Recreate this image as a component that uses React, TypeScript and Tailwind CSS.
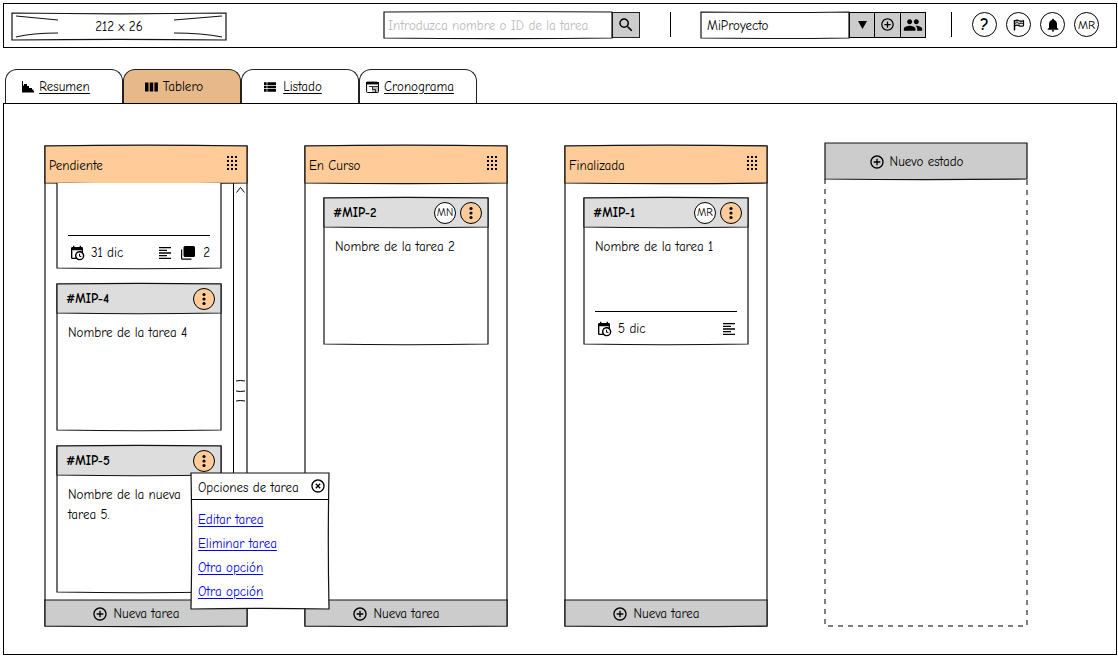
import { useState } from 'react';
import type { ReactNode } from 'react';
import {
  MdAddCircleOutline,
  MdFormatAlignLeft,
  MdHighlightOff,
  MdNotifications,
  MdPeople,
  MdSearch,
  MdViewList,
} from 'react-icons/md';

/* Hand-drawn outline: each side bows by a percentage of the box. */
function Outline({ t = 0, r = 0, b = 0, l = 0 }: { t?: number; r?: number; b?: number; l?: number }) {
  const d = `M0 0Q50 ${-t} 100 0Q${100 + r} 50 100 100Q50 ${100 + b} 0 100Q${-l} 50 0 0Z`;
  return (
    <svg
      aria-hidden="true"
      className="pointer-events-none absolute inset-0 -z-10 size-full overflow-visible"
      viewBox="0 0 100 100"
      preserveAspectRatio="none"
    >
      <path d={d} fill="currentColor" stroke="#111" strokeWidth="1.2" vectorEffect="non-scaling-stroke" />
    </svg>
  );
}

function CalendarClock() {
  return (
    <svg aria-hidden="true" viewBox="0 0 24 24" className="size-4" fill="currentColor">
      <path d="M15 13h1.5v2.82l2.44 1.41-.75 1.3L15 16.69V13m4-5H5v11h4.67C9.24 18.09 9 17.07 9 16a7 7 0 0 1 7-7c1.07 0 2.09.24 3 .67V8M5 21a2 2 0 0 1-2-2V5c0-1.11.89-2 2-2h1V1h2v2h8V1h2v2h1a2 2 0 0 1 2 2v6.1c1.24 1.26 2 2.99 2 4.9a7 7 0 0 1-7 7c-1.91 0-3.64-.76-4.9-2H5m11-9.85A4.85 4.85 0 0 0 11.15 16c0 2.68 2.17 4.85 4.85 4.85A4.85 4.85 0 0 0 20.85 16c0-2.68-2.17-4.85-4.85-4.85Z" />
    </svg>
  );
}

function Copies() {
  return (
    <svg aria-hidden="true" viewBox="0 0 14 14" className="size-[14px]" fill="currentColor">
      <path d="M4 0h8.500a1.500 1.500 0 0 1 1.500 1.500v8a1.500 1.500 0 0 1-1.500 1.500H4a1.500 1.500 0 0 1-1.500-1.500v-8A1.500 1.500 0 0 1 4 0ZM0 3.500h1.200v9H10.500v1.200H1.200A1.200 1.200 0 0 1 0 12.500v-9Z" />
    </svg>
  );
}

function Histogram() {
  return (
    <svg aria-hidden="true" viewBox="0 0 12 12" className="size-3" fill="currentColor">
      <path d="M0 0h1v10h11v1.500H0V0ZM1 4.500h1V3h3v2h2v2h3v1.500h1.500V11H1V4.500Z" />
    </svg>
  );
}

function Columns() {
  return (
    <svg aria-hidden="true" viewBox="0 0 13 12" className="h-3 w-[13px]" fill="currentColor">
      <path d="M0 1.500h3.500v9H0zM4.700 1.500h3.500v9H4.700zM9.400 1.500h3.500v9H9.400z" />
    </svg>
  );
}

function Schedule() {
  return (
    <svg aria-hidden="true" viewBox="0 0 13 12" className="h-3 w-[13px]" fill="none" stroke="currentColor">
      <path d="M6 6h6v5H6z" fill="#bbb" stroke="none" />
      <path d="M.6 2v8.500q0 1 1 1h10q.9 0 .9-1V2" />
      <path d="M0 2.200h13" strokeWidth="2.400" />
      <path d="M1.500.7h10" strokeWidth="1" strokeDasharray="1 1" />
      <path d="M3 5.500h9M6.500 5.500v3M6.500 8.500h3M9.500 8.500v3" strokeWidth=".8" />
    </svg>
  );
}

function Flag() {
  return (
    <svg aria-hidden="true" viewBox="0 0 14 14" className="size-[14px]" fill="none" stroke="currentColor">
      <path d="M2.500 2v10.500" strokeWidth="1.500" />
      <path d="M3 2.700q2-1 4 0t4.500 0v5q-2.500 1-4.500 0t-4 0" strokeWidth="1.200" />
      <path d="M3 5.200q2-1 4 0t4.500 0M5 2.300v2.500M9 3v2.500M7 5v2.500" strokeWidth=".8" />
    </svg>
  );
}

function Grip() {
  return (
    <svg aria-hidden="true" viewBox="0 0 12 16" className="h-4 w-3" fill="currentColor">
      {[1, 5, 9].map((x) => [1, 5, 9, 13].map((y) => <rect key={`${x}-${y}`} x={x} y={y} width="2" height="2" />))}
    </svg>
  );
}

function Dots() {
  return (
    <svg aria-hidden="true" viewBox="0 0 4 14" className="h-[14px] w-1" fill="currentColor">
      <circle cx="2" cy="2.500" r="1.600" />
      <circle cx="2" cy="7" r="1.600" />
      <circle cx="2" cy="11.500" r="1.600" />
    </svg>
  );
}

function RoundButton({ label, children }: { label: string; children: ReactNode }) {
  return (
    <button
      aria-label={label}
      className="flex size-[25px] items-center justify-center rounded-full border border-black bg-white"
    >
      {children}
    </button>
  );
}

const tabs = [
  { name: 'Resumen', icon: <Histogram /> },
  { name: 'Tablero', icon: <Columns /> },
  { name: 'Listado', icon: <MdViewList size={16} /> },
  { name: 'Cronograma', icon: <Schedule /> },
];

type Task = { id?: string; name?: string; user?: string; date?: string; copies?: number };

function Card({ task, onMenu }: { task: Task; onMenu?: () => void }) {
  return (
    <article className="relative isolate flex h-[146px] shrink-0 flex-col text-white">
      <Outline b={1} />
      <header className="relative isolate flex h-[29px] shrink-0 items-center gap-1 pr-[6px] pl-[9px] text-[#dddddd]">
        <Outline t={5} b={5} />
        <h3 className="mr-auto font-bold text-black">{task.id}</h3>
        {task.user && (
          <span className="flex size-[22px] items-center justify-center rounded-full border border-black bg-white text-[11px] text-black">
            {task.user}
          </span>
        )}
        <button
          aria-label="Opciones de tarea"
          onClick={onMenu}
          className="flex size-[22px] items-center justify-center rounded-full border border-black bg-[#ffcc99] text-black"
        >
          <Dots />
        </button>
      </header>
      {task.name && <p className="pt-[10px] pr-6 pl-[11px] leading-5 text-black">{task.name}</p>}
      {task.date && (
        <footer className="mx-[11px] mt-auto flex h-[33px] items-center gap-2 border-t border-black pt-[2px] pl-px text-black">
          <div className="mr-auto flex items-center gap-[6px]">
            <CalendarClock />
            <span>{task.date}</span>
          </div>
          <MdFormatAlignLeft size={16} />
          {task.copies && (
            <>
              <Copies />
              <span>{task.copies}</span>
            </>
          )}
        </footer>
      )}
    </article>
  );
}

function Column({ title, children, menu }: { title: string; children: ReactNode; menu?: ReactNode }) {
  return (
    <section className={menu ? 'relative z-10 mt-[3px] flex flex-col text-white' : 'relative z-0 mt-[3px] flex flex-col text-white'}>
      <Outline />
      <header className="relative isolate flex h-[37px] items-center justify-between pr-[9px] pl-1 text-[#ffcc99]">
        <Outline t={5} b={3} />
        <h2 className="pt-[2px] text-black">{title}</h2>
        <button aria-label={`Mover ${title}`} className="pb-1 text-black">
          <Grip />
        </button>
      </header>
      <div className="flex h-[417px] text-black">{children}</div>
      <button className="relative isolate flex h-[26px] items-center justify-center gap-[5px] pt-[2px] pr-5 text-[#cccccc]">
        <Outline b={5} />
        <MdAddCircleOutline size={16} className="text-black" />
        <span className="text-black">Nueva tarea</span>
      </button>
      {menu}
    </section>
  );
}

function TaskMenu({ onClose }: { onClose: () => void }) {
  return (
    <div role="dialog" aria-label="Opciones de tarea" className="absolute bottom-[17px] left-[146px] z-10 w-[138px] text-white">
      <Outline l={-1} r={-1} b={-1} />
      <div className="flex h-[27px] items-center justify-between border-b border-black pr-[3px] pl-[7px] text-black">
        <h3 className="pt-1">Opciones de tarea</h3>
        <button aria-label="Cerrar" onClick={onClose}>
          <MdHighlightOff size={16} />
        </button>
      </div>
      <ul className="px-[7px] pt-2 pb-[5px] leading-6">
        {['Editar tarea', 'Eliminar tarea', 'Otra opción', 'Otra opción'].map((text, i) => (
          <li key={i}>
            <a href="#" className="text-[#0000ff] underline underline-offset-2">
              {text}
            </a>
          </li>
        ))}
      </ul>
    </div>
  );
}

export default function App() {
  const [menuOpen, setMenuOpen] = useState(true);
  return (
    <div className="flex min-h-screen flex-col bg-white pt-[3px] pr-px pb-[13px] pl-[3px] font-['Comic_Neue','Comic_Sans_MS',Inter,sans-serif] text-[13px] leading-5 text-black [font-feature-settings:'cv08','cv11']">
      <header className="flex h-[45px] items-center border border-black pr-[17px] pb-[2px] pl-2">
        <div className="relative isolate mt-1 flex h-[27px] w-[214px] items-center justify-center text-white">
          <Outline t={-6} b={-4} />
          <svg
            aria-hidden="true"
            viewBox="0 0 214 27"
            className="absolute inset-0 size-full"
            fill="none"
            stroke="#111"
            strokeWidth="1.100"
          >
            <path d="M4 3L46 7M4 24Q20 20 46 20M210 3L162 7M210 24Q190 20 162 20" />
          </svg>
          <span className="text-black">212 x 26</span>
        </div>

        <form className="ml-auto flex h-[26px]" onSubmit={(e) => e.preventDefault()}>
          <div className="relative isolate w-[228px] text-white">
            <Outline t={4} b={5} />
            <input
              type="search"
              aria-label="Buscar tarea"
              placeholder="Introduzca nombre o ID de la tarea"
              className="size-full bg-transparent px-1 pt-[2px] text-black outline-none placeholder:text-[#bbbbbb]"
            />
          </div>
          <button aria-label="Buscar" className="flex w-7 items-center justify-center border border-[#222] bg-[#cccccc]">
            <MdSearch size={18} />
          </button>
        </form>

        <div className="mx-[30px] h-[25px] w-px bg-black" />

        <div className="flex h-[26px]">
          <div className="relative isolate flex w-[148px] text-white">
            <Outline t={-4} b={4} />
            <select
              aria-label="Proyecto"
              className="size-full appearance-none bg-transparent px-[6px] pt-[2px] text-black outline-none"
            >
              <option>MiProyecto</option>
            </select>
          </div>
          <button aria-label="Abrir proyectos" className="flex w-[26px] items-center justify-center border border-black bg-[#cccccc]">
            <svg aria-hidden="true" viewBox="0 0 9 8" className="h-2 w-[9px]">
              <path d="M0 0h9L4.500 8z" />
            </svg>
          </button>
          <button aria-label="Nuevo proyecto" className="flex w-[25px] items-center justify-center border-y border-black bg-[#cccccc]">
            <MdAddCircleOutline size={15} />
          </button>
          <button aria-label="Miembros" className="flex w-[26px] items-center justify-center border border-black bg-[#cccccc]">
            <MdPeople size={20} />
          </button>
        </div>

        <div className="mr-5 ml-[25px] h-[25px] w-px bg-black" />

        <nav aria-label="Usuario" className="flex gap-[9px]">
          <RoundButton label="Ayuda">
            <span className="text-[17px] font-bold">?</span>
          </RoundButton>
          <RoundButton label="Reportes">
            <Flag />
          </RoundButton>
          <RoundButton label="Notificaciones">
            <MdNotifications size={16} />
          </RoundButton>
          <RoundButton label="Perfil">
            <span className="text-[12px]">MR</span>
          </RoundButton>
        </nav>
      </header>

      <nav aria-label="Vistas" className="mt-[21px] ml-[2px] flex h-[34px]">
        {tabs.map((tab) => {
          const active = tab.name === 'Tablero';
          return (
            <a
              key={tab.name}
              href="#"
              aria-current={active ? 'page' : undefined}
              className={
                active
                  ? 'flex w-[118px] items-center justify-center gap-[5px] rounded-t-[12px] border border-b-0 border-[#222] bg-[#e6b88a] pr-4'
                  : 'flex w-[118px] items-center justify-center gap-[5px] rounded-t-[12px] border border-b-0 border-[#222] pr-4 underline underline-offset-2'
              }
            >
              {tab.icon}
              {tab.name}
            </a>
          );
        })}
      </nav>

      <main className="grid flex-1 grid-cols-4 gap-x-[58px] border border-black pt-[39px] pr-[89px] pb-7 pl-[41px]">
        <Column title="Pendiente" menu={menuOpen && <TaskMenu onClose={() => setMenuOpen(false)} />}>
          <div className="flex flex-1 flex-col justify-end gap-4 overflow-hidden px-3 pb-2">
            <Card task={{ date: '31 dic', copies: 2 }} />
            <Card task={{ id: '#MIP-4', name: 'Nombre de la tarea 4' }} />
            <Card task={{ id: '#MIP-5', name: 'Nombre de la nueva tarea 5.' }} onMenu={() => setMenuOpen(!menuOpen)} />
          </div>
          <div className="flex w-[14px] flex-col items-center border-l border-black pt-1">
            <svg aria-hidden="true" viewBox="0 0 9 6" className="h-[6px] w-[9px]" fill="none" stroke="currentColor">
              <path d="M.5 5.500l4-5 4 5" />
            </svg>
            <svg aria-hidden="true" viewBox="0 0 9 22" className="mt-[187px] h-[22px] w-[9px]" fill="none" stroke="currentColor">
              <path d="M0 1q4-1 9 0M0 11q4 1 9 0M0 21q4-1 9 0" />
            </svg>
          </div>
        </Column>

        <Column title="En Curso">
          <div className="flex-1 px-[19px] pt-[15px]">
            <Card task={{ id: '#MIP-2', name: 'Nombre de la tarea 2', user: 'MN' }} />
          </div>
        </Column>

        <Column title="Finalizada">
          <div className="flex-1 px-[19px] pt-[15px]">
            <Card task={{ id: '#MIP-1', name: 'Nombre de la tarea 1', user: 'MR', date: '5 dic' }} />
          </div>
        </Column>

        <section className="flex flex-col">
          <button className="relative isolate flex h-9 items-center justify-center gap-[5px] pt-[2px] pr-5 text-[#cccccc]">
            <Outline b={3} />
            <MdAddCircleOutline size={16} className="text-black" />
            <span className="text-black">Nuevo estado</span>
          </button>
          <div className="relative flex-1">
            <svg aria-hidden="true" className="absolute inset-0 size-full overflow-visible" viewBox="0 0 100 100" preserveAspectRatio="none">
              <path
                d="M0 0V100H100V0"
                fill="none"
                stroke="#000"
                strokeDasharray="5 5"
                vectorEffect="non-scaling-stroke"
              />
            </svg>
          </div>
        </section>
      </main>
    </div>
  );
}
